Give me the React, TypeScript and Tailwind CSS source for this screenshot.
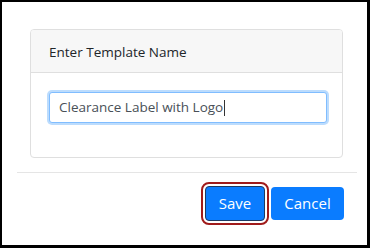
export default function App() {
  return (
    <div
      className="w-[370px] h-[248px] bg-black pl-[2px] pt-[2px] pr-[3px] pb-[3px]"
      style={{ fontFamily: '"Open Sans", "Liberation Sans", sans-serif' }}
    >
      <div className="w-full h-full bg-white flex flex-col">
        {/* Body */}
        <div className="pl-[28px] pr-[24px] pt-[27px]">
          <div className="h-[129px] border border-[#dfdfdf] rounded-[4px] flex flex-col overflow-hidden">
            <div className="h-[43px] shrink-0 bg-[#f7f7f7] border-b border-[#dfdfdf] px-[18px] pt-[2px] flex items-center text-[13.5px] text-[#212529]">
              Enter Template Name
            </div>
            <div className="pl-[18px] pt-[19px]">
              <div className="w-[278px] h-[31px] border border-[#80bdff] rounded-[3px] ring-[2px] ring-[#bcdcfd] bg-white flex items-center px-[9px] text-[13.5px] text-[#495057]">
                <span>Clearance Label with Logo</span>
                <span className="w-px h-[16px] bg-[#333] ml-[1px]" />
              </div>
            </div>
          </div>
        </div>

        {/* Footer */}
        <div className="mt-[14px] ml-[15px] mr-[10px] border-t border-[#e5e5e5] flex justify-end gap-[6px] pt-[13px] pr-[13px]">
          <button className="w-[60px] h-[35px] rounded-[4px] bg-[#0a7cff] border border-[#1d3b63] text-white text-[15px] outline-2 outline-[#a01b1b] outline-offset-[2px] outline-solid">
            Save
          </button>
          <button className="w-[73px] h-[33px] mt-[1px] rounded-[4px] bg-[#0a7cff] text-white text-[15px]">
            Cancel
          </button>
        </div>
      </div>
    </div>
  );
}
